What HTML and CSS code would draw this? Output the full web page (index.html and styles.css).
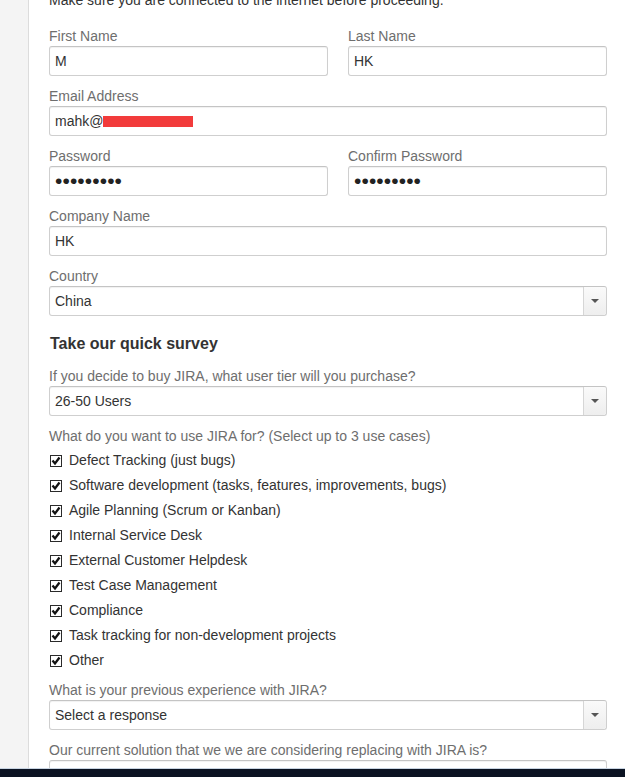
FILE: index.html
```html
<!DOCTYPE html>
<html lang="en">
<head>
  <meta charset="UTF-8">
  <title>Sign up</title>
  <meta name="viewport" content="width=device-width, initial-scale=1">
  <link rel="stylesheet" href="styles.css">
</head>
<body>

<div class="page">
  <div class="side"></div>

  <div class="main">
    <p class="intro">Make sure you are connected to the internet before proceeding.</p>

    <div class="row">
      <div class="col group">
        <label>First Name</label>
        <div class="field">M</div>
      </div>
      <div class="col group">
        <label>Last Name</label>
        <div class="field">HK</div>
      </div>
    </div>

    <div class="group">
      <label>Email Address</label>
      <div class="field">mahk@<span class="redact"></span></div>
    </div>

    <div class="row">
      <div class="col group">
        <label>Password</label>
        <div class="field pw">•••••••••</div>
      </div>
      <div class="col group">
        <label>Confirm Password</label>
        <div class="field pw">•••••••••</div>
      </div>
    </div>

    <div class="group">
      <label>Company Name</label>
      <div class="field">HK</div>
    </div>

    <div class="group">
      <label>Country</label>
      <div class="field select">China<span class="arrow"></span></div>
    </div>

    <h3>Take our quick survey</h3>

    <div class="group">
      <label>If you decide to buy JIRA, what user tier will you purchase?</label>
      <div class="field select">26-50 Users<span class="arrow"></span></div>
    </div>

    <div class="group">
      <label>What do you want to use JIRA for? (Select up to 3 use cases)</label>
      <ul class="checks">
        <li><span class="box"><svg viewBox="0 0 10 10"><polyline points="1.5,4.5 4,7.5 8.5,1.5"/></svg></span>Defect Tracking (just bugs)</li>
        <li><span class="box"><svg viewBox="0 0 10 10"><polyline points="1.5,4.5 4,7.5 8.5,1.5"/></svg></span>Software development (tasks, features, improvements, bugs)</li>
        <li><span class="box"><svg viewBox="0 0 10 10"><polyline points="1.5,4.5 4,7.5 8.5,1.5"/></svg></span>Agile Planning (Scrum or Kanban)</li>
        <li><span class="box"><svg viewBox="0 0 10 10"><polyline points="1.5,4.5 4,7.5 8.5,1.5"/></svg></span>Internal Service Desk</li>
        <li><span class="box"><svg viewBox="0 0 10 10"><polyline points="1.5,4.5 4,7.5 8.5,1.5"/></svg></span>External Customer Helpdesk</li>
        <li><span class="box"><svg viewBox="0 0 10 10"><polyline points="1.5,4.5 4,7.5 8.5,1.5"/></svg></span>Test Case Management</li>
        <li><span class="box"><svg viewBox="0 0 10 10"><polyline points="1.5,4.5 4,7.5 8.5,1.5"/></svg></span>Compliance</li>
        <li><span class="box"><svg viewBox="0 0 10 10"><polyline points="1.5,4.5 4,7.5 8.5,1.5"/></svg></span>Task tracking for non-development projects</li>
        <li><span class="box"><svg viewBox="0 0 10 10"><polyline points="1.5,4.5 4,7.5 8.5,1.5"/></svg></span>Other</li>
      </ul>
    </div>

    <div class="group">
      <label>What is your previous experience with JIRA?</label>
      <div class="field select">Select a response<span class="arrow"></span></div>
    </div>

    <div class="group">
      <label>Our current solution that we we are considering replacing with JIRA is?</label>
      <div class="field"></div>
    </div>
  </div>
</div>

<div class="taskbar"></div>

</body>
</html>
```

FILE: styles.css
```css
* {
  box-sizing: border-box;
}

html, body {
  height: 100%;
  overflow: hidden;
}

body {
  margin: 0;
  font-family: 'Liberation Sans', Arial, sans-serif;
  font-size: 14px;
  line-height: 20px;
  color: #333;
  background: white;
}

.page {
  display: flex;
  min-height: 100%;
}

.side {
  width: 29px;
  flex-shrink: 0;
  background: #f4f4f4;
  border-right: 1px solid #dcdcdc;
}

.main {
  flex: 1;
  padding: 0 18px 0 20px;
}

.intro {
  margin: -10px 0 16px;
}

.row {
  display: flex;
}

.col {
  flex: 0 0 50%;
}

.col + .col {
  padding-left: 20px;
}

.group {
  margin-bottom: 10px;
}

.group label {
  display: block;
  color: #6e6e6e;
}

.field {
  position: relative;
  height: 30px;
  padding: 0 5px;
  line-height: 28px;
  border: 1px solid #cfcfcf;
  border-top-color: #c4c4c4;
  border-radius: 3px;
  box-shadow: inset 0 1px 1px rgba(0,0,0,0.06);
  background: white;
  color: #333;
}

.field.pw {
  font-size: 21px;
  letter-spacing: 0.1px;
  color: #222;
}

.redact {
  display: inline-block;
  width: 90px;
  height: 11px;
  background: #f23b3b;
  vertical-align: -1px;
}

.select .arrow {
  position: absolute;
  top: 0;
  right: 0;
  bottom: 0;
  width: 23px;
  border-left: 1px solid #d6d6d6;
  background: linear-gradient(#fafafa, #eeeeee);
  border-radius: 0 3px 3px 0;
}

.select .arrow::after {
  content: "";
  position: absolute;
  left: 7px;
  top: 12px;
  border-left: 4px solid transparent;
  border-right: 4px solid transparent;
  border-top: 4px solid #555;
}

h3 {
  margin: 18px 0 12px 1px;
  font-size: 16px;
  line-height: 20px;
  font-weight: bold;
  color: #333;
}

.checks {
  list-style: none;
  margin: 4px 0 0;
  padding: 0;
}

.checks li {
  display: flex;
  align-items: center;
  height: 20px;
  margin-bottom: 5px;
  color: #333;
}

.checks li:last-child {
  margin-bottom: 0;
}

.box {
  width: 12px;
  height: 12px;
  margin: 1px 7px 0 1px;
  border: 1px solid #2a2a2a;
  background: white;
  display: flex;
}

.box svg {
  width: 10px;
  height: 10px;
}

.box polyline {
  fill: none;
  stroke: #111;
  stroke-width: 2.3;
}

.taskbar {
  position: fixed;
  left: 0;
  right: 0;
  bottom: 0;
  height: 9px;
  background: #0b1322;
  border-top: 1px solid #c8d4e2;
}
```
